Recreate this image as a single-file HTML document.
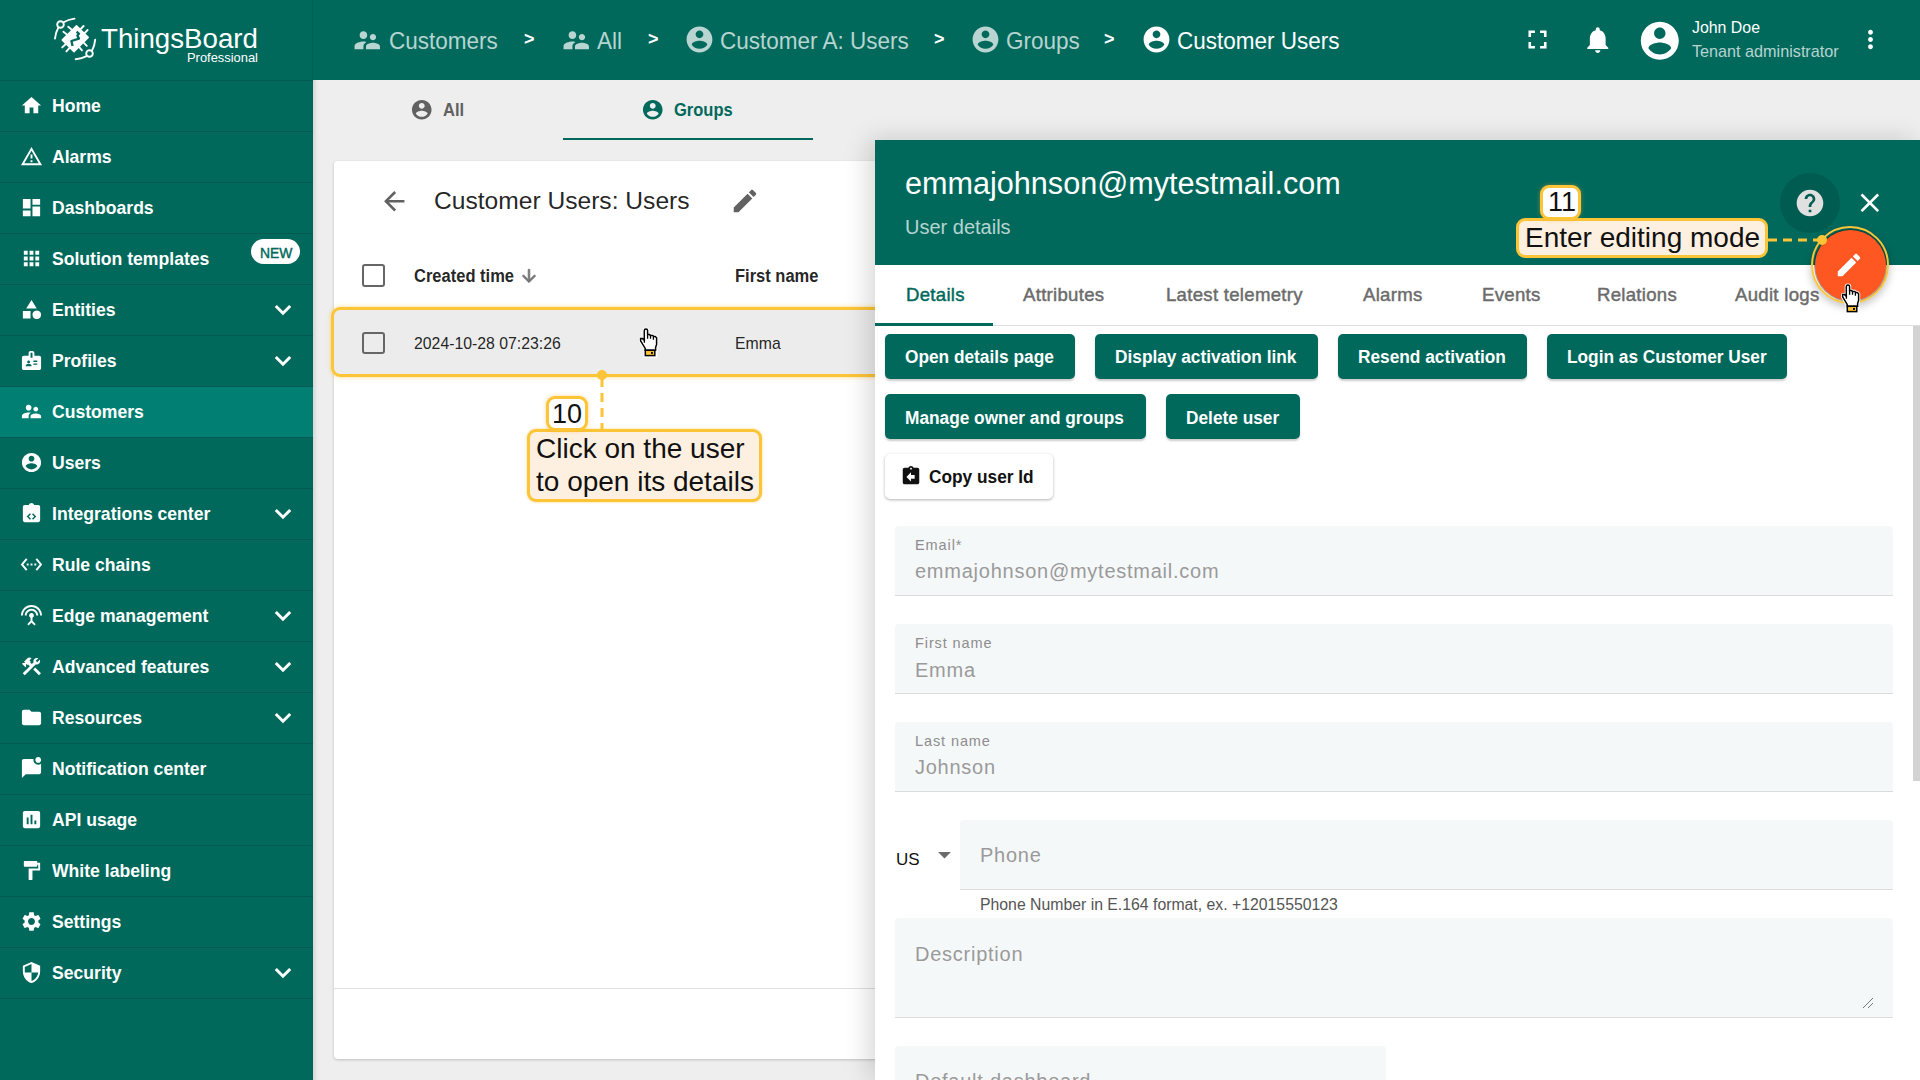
<!DOCTYPE html>
<html><head><meta charset="utf-8">
<style>
*{box-sizing:border-box;margin:0;padding:0}
html,body{width:1920px;height:1080px;overflow:hidden;font-family:"Liberation Sans",sans-serif;background:#eeeeee;position:relative}
.abs{position:absolute}
.t{position:absolute;white-space:nowrap;line-height:1}
svg{display:block}
</style></head><body>
<div class="abs" style="left:0px;top:0px;width:313px;height:1080px;background:#00695c"></div>
<div class="abs" style="left:313px;top:0px;width:1607px;height:80px;background:#00695c"></div>
<div class="abs" style="left:312px;top:0px;width:1px;height:80px;background:rgba(0,0,0,0.10)"></div>
<div class="abs" style="left:0px;top:80px;width:313px;height:1px;background:rgba(0,0,0,0.12)"></div>
<div class="abs" style="left:0px;top:131px;width:313px;height:1px;background:rgba(0,0,0,0.12)"></div>
<svg class="abs" style="left:20px;top:93.8px;" width="23" height="23" viewBox="0 0 24 24"><path fill="#fff" d="M10 20v-6h4v6h5v-8h3L12 3 2 12h3v8z"/></svg>
<div class="t " style="left:52px;top:96.76px;font-size:18.6px;color:#fff;font-weight:700;transform:scaleX(0.946);transform-origin:0 0;">Home</div>
<div class="abs" style="left:0px;top:182px;width:313px;height:1px;background:rgba(0,0,0,0.12)"></div>
<svg class="abs" style="left:20px;top:144.8px;" width="23" height="23" viewBox="0 0 24 24"><path fill="#fff" d="M12 5.99L19.53 19H4.47L12 5.99M12 2L1 21h22L12 2zm1 14h-2v2h2v-2zm0-6h-2v4h2v-4z"/></svg>
<div class="t " style="left:52px;top:147.76px;font-size:18.6px;color:#fff;font-weight:700;transform:scaleX(0.946);transform-origin:0 0;">Alarms</div>
<div class="abs" style="left:0px;top:233px;width:313px;height:1px;background:rgba(0,0,0,0.12)"></div>
<svg class="abs" style="left:20px;top:195.8px;" width="23" height="23" viewBox="0 0 24 24"><path fill="#fff" d="M3 13h8V3H3v10zm0 8h8v-6H3v6zm10 0h8V11h-8v10zm0-18v6h8V3h-8z"/></svg>
<div class="t " style="left:52px;top:198.76px;font-size:18.6px;color:#fff;font-weight:700;transform:scaleX(0.946);transform-origin:0 0;">Dashboards</div>
<div class="abs" style="left:0px;top:284px;width:313px;height:1px;background:rgba(0,0,0,0.12)"></div>
<svg class="abs" style="left:20px;top:246.8px;" width="23" height="23" viewBox="0 0 24 24"><path fill="#fff" d="M4 8h4V4H4v4zm6 12h4v-4h-4v4zm-6 0h4v-4H4v4zm0-6h4v-4H4v4zm6 0h4v-4h-4v4zm6-10v4h4V4h-4zm-6 4h4V4h-4v4zm6 6h4v-4h-4v4zm0 6h4v-4h-4v4z"/></svg>
<div class="t " style="left:52px;top:249.76px;font-size:18.6px;color:#fff;font-weight:700;transform:scaleX(0.946);transform-origin:0 0;">Solution templates</div>
<div class="abs" style="left:0px;top:335px;width:313px;height:1px;background:rgba(0,0,0,0.12)"></div>
<svg class="abs" style="left:20px;top:297.8px;" width="23" height="23" viewBox="0 0 24 24"><path fill="#fff" d="M12 2l-5.5 9h11z M17.5 13a4.5 4.5 0 1 0 0.001 0z M3 13.5h8v8H3z"/></svg>
<div class="t " style="left:52px;top:300.76px;font-size:18.6px;color:#fff;font-weight:700;transform:scaleX(0.946);transform-origin:0 0;">Entities</div>
<svg class="abs" style="left:272px;top:303px" width="22" height="14" viewBox="0 0 22 14"><path d="M3.8 3 L11 10.2 L18.2 3" fill="none" stroke="#fff" stroke-width="3"/></svg>
<div class="abs" style="left:0px;top:386px;width:313px;height:1px;background:rgba(0,0,0,0.12)"></div>
<svg class="abs" style="left:20px;top:348.8px;" width="23" height="23" viewBox="0 0 24 24"><path fill="#fff" d="M20 7h-5V4c0-1.1-.9-2-2-2h-2c-1.1 0-2 .9-2 2v3H4c-1.1 0-2 .9-2 2v11c0 1.1.9 2 2 2h16c1.1 0 2-.9 2-2V9c0-1.1-.9-2-2-2zM9 12c.83 0 1.5.67 1.5 1.5S9.83 15 9 15s-1.5-.67-1.5-1.5S8.17 12 9 12zm3 6H6v-.75c0-1 2-1.5 3-1.5s3 .5 3 1.5V18zm1-9h-2V4h2v5zm5 7.5h-4V15h4v1.5zm0-3h-4V12h4v1.5z"/></svg>
<div class="t " style="left:52px;top:351.76px;font-size:18.6px;color:#fff;font-weight:700;transform:scaleX(0.946);transform-origin:0 0;">Profiles</div>
<svg class="abs" style="left:272px;top:354px" width="22" height="14" viewBox="0 0 22 14"><path d="M3.8 3 L11 10.2 L18.2 3" fill="none" stroke="#fff" stroke-width="3"/></svg>
<div class="abs" style="left:0px;top:387px;width:313px;height:50px;background:#007f72"></div>
<div class="abs" style="left:0px;top:437px;width:313px;height:1px;background:rgba(0,0,0,0.12)"></div>
<svg class="abs" style="left:20px;top:399.8px;" width="23" height="23" viewBox="0 0 24 24"><path fill="#fff" d="M16.5 12c1.38 0 2.49-1.12 2.49-2.5S17.88 7 16.5 7C15.12 7 14 8.12 14 9.5s1.12 2.5 2.5 2.5zM9 11c1.66 0 2.99-1.34 2.99-3S10.66 5 9 5C7.34 5 6 6.34 6 8s1.34 3 3 3zm7.5 3c-1.83 0-5.5.92-5.5 2.75V19h11v-2.25c0-1.830-3.67-2.75-5.5-2.75zM9 13c-2.34 0-7 1.17-7 3.5V19h7v-2.25c0-.85.33-2.34 2.37-3.47C10.5 13.1 9.66 13 9 13z"/></svg>
<div class="t " style="left:52px;top:402.76px;font-size:18.6px;color:#fff;font-weight:700;transform:scaleX(0.946);transform-origin:0 0;">Customers</div>
<div class="abs" style="left:0px;top:488px;width:313px;height:1px;background:rgba(0,0,0,0.12)"></div>
<svg class="abs" style="left:20px;top:450.8px;" width="23" height="23" viewBox="0 0 24 24"><path fill="#fff" d="M12 2C6.48 2 2 6.48 2 12s4.48 10 10 10 10-4.48 10-10S17.52 2 12 2zm0 3c1.66 0 3 1.34 3 3s-1.34 3-3 3-3-1.34-3-3 1.34-3 3-3zm0 14.2c-2.5 0-4.71-1.28-6-3.22.03-1.99 4-3.08 6-3.08 1.99 0 5.97 1.09 6 3.08-1.29 1.940-3.5 3.22-6 3.22z"/></svg>
<div class="t " style="left:52px;top:453.76px;font-size:18.6px;color:#fff;font-weight:700;transform:scaleX(0.946);transform-origin:0 0;">Users</div>
<div class="abs" style="left:0px;top:539px;width:313px;height:1px;background:rgba(0,0,0,0.12)"></div>
<svg class="abs" style="left:20px;top:501.8px;" width="23" height="23" viewBox="0 0 24 24"><path fill="#fff" d="M19 3h-4.18C14.4 1.84 13.3 1 12 1s-2.4.84-2.82 2H5c-1.1 0-2 .9-2 2v14c0 1.1.9 2 2 2h14c1.1 0 2-.9 2-2V5c0-1.1-.9-2-2-2zm-8.6 15.6L7 15.2l3.4-3.4 1.06 1.06L9.12 15.2l2.34 2.34-1.06 1.06zm3.2 0l-1.06-1.06 2.34-2.34-2.34-2.34 1.06-1.06L17 15.2l-3.4 3.4z"/></svg>
<div class="t " style="left:52px;top:504.76px;font-size:18.6px;color:#fff;font-weight:700;transform:scaleX(0.946);transform-origin:0 0;">Integrations center</div>
<svg class="abs" style="left:272px;top:507px" width="22" height="14" viewBox="0 0 22 14"><path d="M3.8 3 L11 10.2 L18.2 3" fill="none" stroke="#fff" stroke-width="3"/></svg>
<div class="abs" style="left:0px;top:590px;width:313px;height:1px;background:rgba(0,0,0,0.12)"></div>
<svg class="abs" style="left:20px;top:552.8px;" width="23" height="23" viewBox="0 0 24 24"><path fill="#fff" d="M7.77 6.76L6.23 5.48.82 12l5.41 6.52 1.54-1.28L3.42 12l4.35-5.24zM7 13h2v-2H7v2zm10-2h-2v2h2v-2zm-6 2h2v-2h-2v2zm6.77-7.52l-1.54 1.28L20.58 12l-4.35 5.24 1.54 1.28L23.18 12l-5.41-6.52z"/></svg>
<div class="t " style="left:52px;top:555.76px;font-size:18.6px;color:#fff;font-weight:700;transform:scaleX(0.946);transform-origin:0 0;">Rule chains</div>
<div class="abs" style="left:0px;top:641px;width:313px;height:1px;background:rgba(0,0,0,0.12)"></div>
<svg class="abs" style="left:20px;top:603.8px;" width="23" height="23" viewBox="0 0 24 24"><path fill="#fff" d="M12 5c-3.87 0-7 3.13-7 7h2c0-2.76 2.24-5 5-5s5 2.24 5 5h2c0-3.87-3.13-7-7-7zm1 9.29c.88-.39 1.5-1.26 1.5-2.29 0-1.38-1.12-2.5-2.5-2.5S9.5 10.62 9.5 12c0 1.02.62 1.9 1.5 2.29v3.3L7.59 21 9 22.41l3-3 3 3L16.41 21 13 17.59v-3.3zM12 1C5.930 1 1 5.93 1 12h2c0-4.97 4.03-9 9-9s9 4.03 9 9h2c0-6.07-4.93-11-11-11z"/></svg>
<div class="t " style="left:52px;top:606.76px;font-size:18.6px;color:#fff;font-weight:700;transform:scaleX(0.946);transform-origin:0 0;">Edge management</div>
<svg class="abs" style="left:272px;top:609px" width="22" height="14" viewBox="0 0 22 14"><path d="M3.8 3 L11 10.2 L18.2 3" fill="none" stroke="#fff" stroke-width="3"/></svg>
<div class="abs" style="left:0px;top:692px;width:313px;height:1px;background:rgba(0,0,0,0.12)"></div>
<svg class="abs" style="left:20px;top:654.8px;" width="23" height="23" viewBox="0 0 24 24"><path fill="#fff" d="M13.783 15.172l2.121-2.121 5.996 5.996-2.121 2.121zM17.5 10c1.93 0 3.5-1.57 3.5-3.5 0-.58-.16-1.12-.41-1.6l-2.7 2.7-1.49-1.49 2.7-2.7c-.48-.25-1.02-.41-1.6-.41C15.57 3 14 4.57 14 6.5c0 .41.08.8.21 1.16l-1.850 1.85-1.78-1.78.71-.71-1.41-1.41L12 3.49c-1.17-1.17-3.07-1.17-4.24 0L4.22 7.03l1.41 1.41H2.81l-.71.71 3.54 3.54.71-.71V9.15l1.41 1.41.71-.71 1.78 1.78-7.41 7.41 2.12 2.12L16.34 9.790c.36.13.75.21 1.16.21z"/></svg>
<div class="t " style="left:52px;top:657.76px;font-size:18.6px;color:#fff;font-weight:700;transform:scaleX(0.946);transform-origin:0 0;">Advanced features</div>
<svg class="abs" style="left:272px;top:660px" width="22" height="14" viewBox="0 0 22 14"><path d="M3.8 3 L11 10.2 L18.2 3" fill="none" stroke="#fff" stroke-width="3"/></svg>
<div class="abs" style="left:0px;top:743px;width:313px;height:1px;background:rgba(0,0,0,0.12)"></div>
<svg class="abs" style="left:20px;top:705.8px;" width="23" height="23" viewBox="0 0 24 24"><path fill="#fff" d="M10 4H4c-1.1 0-1.99.9-1.99 2L2 18c0 1.1.9 2 2 2h16c1.1 0 2-.9 2-2V8c0-1.1-.9-2-2-2h-8l-2-2z"/></svg>
<div class="t " style="left:52px;top:708.76px;font-size:18.6px;color:#fff;font-weight:700;transform:scaleX(0.946);transform-origin:0 0;">Resources</div>
<svg class="abs" style="left:272px;top:711px" width="22" height="14" viewBox="0 0 22 14"><path d="M3.8 3 L11 10.2 L18.2 3" fill="none" stroke="#fff" stroke-width="3"/></svg>
<div class="abs" style="left:0px;top:794px;width:313px;height:1px;background:rgba(0,0,0,0.12)"></div>
<svg class="abs" style="left:20px;top:756.8px;" width="23" height="23" viewBox="0 0 24 24"><path fill="#fff" d="M22 6.98V16c0 1.1-.9 2-2 2H6l-4 4V4c0-1.1.9-2 2-2h10.1c-.06.32-.1.66-.1 1 0 2.76 2.24 5 5 5 1.13 0 2.16-.39 3-1.02zM16 3c0 1.66 1.34 3 3 3s3-1.34 3-3-1.34-3-3-3-3 1.34-3 3z"/></svg>
<div class="t " style="left:52px;top:759.76px;font-size:18.6px;color:#fff;font-weight:700;transform:scaleX(0.946);transform-origin:0 0;">Notification center</div>
<div class="abs" style="left:0px;top:845px;width:313px;height:1px;background:rgba(0,0,0,0.12)"></div>
<svg class="abs" style="left:20px;top:807.8px;" width="23" height="23" viewBox="0 0 24 24"><path fill="#fff" d="M19 3H5c-1.1 0-2 .9-2 2v14c0 1.1.9 2 2 2h14c1.1 0 2-.9 2-2V5c0-1.1-.9-2-2-2zM9 17H7v-7h2v7zm4 0h-2V7h2v10zm4 0h-2v-4h2v4z"/></svg>
<div class="t " style="left:52px;top:810.76px;font-size:18.6px;color:#fff;font-weight:700;transform:scaleX(0.946);transform-origin:0 0;">API usage</div>
<div class="abs" style="left:0px;top:896px;width:313px;height:1px;background:rgba(0,0,0,0.12)"></div>
<svg class="abs" style="left:20px;top:858.8px;" width="23" height="23" viewBox="0 0 24 24"><path fill="#fff" d="M18 4V3c0-.55-.45-1-1-1H5c-.55 0-1 .45-1 1v4c0 .55.45 1 1 1h12c.55 0 1-.45 1-1V6h1v4H9v11c0 .55.45 1 1 1h2c.55 0 1-.45 1-1v-9h8V4h-3z"/></svg>
<div class="t " style="left:52px;top:861.76px;font-size:18.6px;color:#fff;font-weight:700;transform:scaleX(0.946);transform-origin:0 0;">White labeling</div>
<div class="abs" style="left:0px;top:947px;width:313px;height:1px;background:rgba(0,0,0,0.12)"></div>
<svg class="abs" style="left:20px;top:909.8px;" width="23" height="23" viewBox="0 0 24 24"><path fill="#fff" d="M19.14 12.94c.04-.3.06-.61.06-.94 0-.32-.02-.64-.07-.94l2.03-1.58c.18-.14.23-.41.12-.61l-1.92-3.32c-.12-.22-.37-.29-.59-.22l-2.39.96c-.5-.38-1.03-.7-1.62-.94l-.36-2.54c-.04-.24-.24-.41-.48-.41h-3.84c-.24 0-.43.17-.47.41l-.36 2.54c-.59.24-1.13.57-1.62.94l-2.39-.96c-.22-.08-.47 0-.59.22L2.74 8.87c-.12.21-.08.47.12.61l2.03 1.58c-.05.3-.09.63-.09.94s.02.64.07.94l-2.03 1.58c-.18.14-.23.41-.12.61l1.92 3.32c.12.22.37.29.59.22l2.39-.96c.5.38 1.03.7 1.62.94l.36 2.54c.05.24.24.41.48.41h3.84c.24 0 .44-.17.47-.41l.36-2.54c.59-.24 1.13-.56 1.62-.94l2.39.96c.22.08.47 0 .59-.22l1.92-3.32c.12-.22.07-.47-.12-.61l-2.01-1.58zM12 15.6c-1.98 0-3.6-1.62-3.6-3.6s1.62-3.6 3.6-3.6 3.6 1.62 3.6 3.6-1.62 3.6-3.6 3.6z"/></svg>
<div class="t " style="left:52px;top:912.76px;font-size:18.6px;color:#fff;font-weight:700;transform:scaleX(0.946);transform-origin:0 0;">Settings</div>
<div class="abs" style="left:0px;top:998px;width:313px;height:1px;background:rgba(0,0,0,0.12)"></div>
<svg class="abs" style="left:20px;top:960.8px;" width="23" height="23" viewBox="0 0 24 24"><path fill="#fff" d="M12 1L3 5v6c0 5.55 3.84 10.74 9 12 5.16-1.26 9-6.45 9-12V5l-9-4zm0 10.99h7c-.53 4.12-3.28 7.79-7 8.94V12H5V6.3l7-3.11v8.8z"/></svg>
<div class="t " style="left:52px;top:963.76px;font-size:18.6px;color:#fff;font-weight:700;transform:scaleX(0.946);transform-origin:0 0;">Security</div>
<svg class="abs" style="left:272px;top:966px" width="22" height="14" viewBox="0 0 22 14"><path d="M3.8 3 L11 10.2 L18.2 3" fill="none" stroke="#fff" stroke-width="3"/></svg>
<div class="abs" style="left:251px;top:239.4px;width:49px;height:25px;background:#fff;border-radius:13px"></div>
<div class="t " style="left:259.8px;top:245.30px;font-size:15px;color:#00695c;font-weight:400;-webkit-text-stroke:0.45px #00695c;transform:scaleX(0.925);transform-origin:0 0;">NEW</div>
<svg class="abs" style="left:48px;top:12px" width="60" height="54" viewBox="0 0 60 54">
<g fill="none" stroke="#fff" stroke-width="1.9" stroke-linecap="round">
<circle cx="12.5" cy="12.5" r="3.3"/><circle cx="41.5" cy="41.5" r="3.3"/>
<path d="M15.6 10.2 Q 20 7.6 26.5 6.6"/><path d="M10.4 15.6 Q 7.8 20 7 26.5"/>
<path d="M44 38.6 Q 46.6 34 47.2 27.7"/><path d="M38.6 44.2 Q 34 46.6 27.7 47.2"/>
<path d="M15.4 19.8 L18.6 22.2 M20.2 14.8 L23.2 17.2 M32.6 17.2 L35.6 14.0 M36.6 21.2 L39.6 18.0 M35.2 30.2 L38.8 33.8 M31.2 35.2 L34 38.4 M14.2 35.4 L17.6 32.2 M18.4 39.4 L21.6 35.8"/>
</g>
<path d="M14.2 28 L28.5 13.8 L40.2 25.4 L26 39.6 Z" fill="#fff" stroke="#fff" stroke-width="1.5" stroke-linejoin="round"/>
<path d="M28.6 19.6 L31 21.8 L29.4 23.6 L31 26.6 L23.4 29 L24.6 34" fill="none" stroke="#00695c" stroke-width="2.3" stroke-linejoin="round"/>
</svg>
<div class="t " style="left:101px;top:25.05px;font-size:27.7px;color:#fff;font-weight:400;">ThingsBoard</div>
<div class="t " style="left:187px;top:52.08px;font-size:12.9px;color:#fff;font-weight:400;">Professional</div>
<svg class="abs" style="left:351.5px;top:25.1px;" width="30.5" height="30.5" viewBox="0 0 24 24"><path fill="rgba(255,255,255,0.72)" d="M16.5 12c1.38 0 2.49-1.12 2.49-2.5S17.88 7 16.5 7C15.12 7 14 8.12 14 9.5s1.12 2.5 2.5 2.5zM9 11c1.66 0 2.99-1.34 2.99-3S10.66 5 9 5C7.34 5 6 6.34 6 8s1.34 3 3 3zm7.5 3c-1.83 0-5.5.92-5.5 2.75V19h11v-2.25c0-1.830-3.67-2.75-5.5-2.75zM9 13c-2.34 0-7 1.17-7 3.5V19h7v-2.25c0-.85.33-2.34 2.37-3.47C10.5 13.1 9.66 13 9 13z"/></svg>
<div class="t " style="left:389px;top:29.26px;font-size:24.5px;color:rgba(255,255,255,0.72);font-weight:400;transform:scaleX(0.918);transform-origin:0 0;">Customers</div>
<svg class="abs" style="left:560.5px;top:25.1px;" width="30.5" height="30.5" viewBox="0 0 24 24"><path fill="rgba(255,255,255,0.72)" d="M16.5 12c1.38 0 2.49-1.12 2.49-2.5S17.88 7 16.5 7C15.12 7 14 8.12 14 9.5s1.12 2.5 2.5 2.5zM9 11c1.66 0 2.99-1.34 2.99-3S10.66 5 9 5C7.34 5 6 6.34 6 8s1.34 3 3 3zm7.5 3c-1.83 0-5.5.92-5.5 2.75V19h11v-2.25c0-1.830-3.67-2.75-5.5-2.75zM9 13c-2.34 0-7 1.17-7 3.5V19h7v-2.25c0-.85.33-2.34 2.37-3.47C10.5 13.1 9.66 13 9 13z"/></svg>
<div class="t " style="left:597px;top:29.26px;font-size:24.5px;color:rgba(255,255,255,0.72);font-weight:400;transform:scaleX(0.918);transform-origin:0 0;">All</div>
<svg class="abs" style="left:683.8px;top:24.1px;" width="31" height="31" viewBox="0 0 24 24"><path fill="rgba(255,255,255,0.72)" d="M12 2C6.48 2 2 6.48 2 12s4.48 10 10 10 10-4.48 10-10S17.52 2 12 2zm0 3c1.66 0 3 1.34 3 3s-1.34 3-3 3-3-1.34-3-3 1.34-3 3-3zm0 14.2c-2.5 0-4.71-1.28-6-3.22.03-1.99 4-3.08 6-3.08 1.99 0 5.97 1.09 6 3.08-1.29 1.940-3.5 3.22-6 3.22z"/></svg>
<div class="t " style="left:720px;top:29.26px;font-size:24.5px;color:rgba(255,255,255,0.72);font-weight:400;transform:scaleX(0.918);transform-origin:0 0;">Customer A: Users</div>
<svg class="abs" style="left:969.9px;top:24.1px;" width="31" height="31" viewBox="0 0 24 24"><path fill="rgba(255,255,255,0.72)" d="M12 2C6.48 2 2 6.48 2 12s4.48 10 10 10 10-4.48 10-10S17.52 2 12 2zm0 3c1.66 0 3 1.34 3 3s-1.34 3-3 3-3-1.34-3-3 1.34-3 3-3zm0 14.2c-2.5 0-4.71-1.28-6-3.22.03-1.99 4-3.08 6-3.08 1.99 0 5.97 1.09 6 3.08-1.29 1.940-3.5 3.22-6 3.22z"/></svg>
<div class="t " style="left:1006px;top:29.26px;font-size:24.5px;color:rgba(255,255,255,0.72);font-weight:400;transform:scaleX(0.918);transform-origin:0 0;">Groups</div>
<div class="t " style="left:524px;top:30.06px;font-size:18px;color:#fff;font-weight:700;">&gt;</div>
<div class="t " style="left:648px;top:30.06px;font-size:18px;color:#fff;font-weight:700;">&gt;</div>
<div class="t " style="left:934px;top:30.06px;font-size:18px;color:#fff;font-weight:700;">&gt;</div>
<div class="t " style="left:1104px;top:30.06px;font-size:18px;color:#fff;font-weight:700;">&gt;</div>
<svg class="abs" style="left:1140.6px;top:24.1px;" width="31" height="31" viewBox="0 0 24 24"><path fill="#fff" d="M12 2C6.48 2 2 6.48 2 12s4.48 10 10 10 10-4.48 10-10S17.52 2 12 2zm0 3c1.66 0 3 1.34 3 3s-1.34 3-3 3-3-1.34-3-3 1.34-3 3-3zm0 14.2c-2.5 0-4.71-1.28-6-3.22.03-1.99 4-3.08 6-3.08 1.99 0 5.97 1.09 6 3.08-1.29 1.940-3.5 3.22-6 3.22z"/></svg>
<div class="t " style="left:1177px;top:29.26px;font-size:24.5px;color:#fff;font-weight:400;transform:scaleX(0.918);transform-origin:0 0;">Customer Users</div>
<svg class="abs" style="left:1521.5px;top:24.1px;" width="31" height="31" viewBox="0 0 24 24"><path fill="#fff" d="M7 14H5v5h5v-2H7v-3zm-2-4h2V7h3V5H5v5zm12 7h-3v2h5v-5h-2v3zM14 5v2h3v3h2V5h-5z"/></svg>
<svg class="abs" style="left:1581.75px;top:23.7px;" width="31.5" height="31.5" viewBox="0 0 24 24"><path fill="#fff" d="M12 22c1.1 0 2-.9 2-2h-4c0 1.1.89 2 2 2zm6-6v-5c0-3.07-1.64-5.64-4.5-6.32V4c0-.83-.67-1.5-1.5-1.5s-1.5.67-1.5 1.5v.68C7.63 5.36 6 7.92 6 11v5l-2 2v1h16v-1l-2-2z"/></svg>
<svg class="abs" style="left:1637.2px;top:17.9px;" width="45.6" height="45.6" viewBox="0 0 24 24"><path fill="#fff" d="M12 2C6.48 2 2 6.48 2 12s4.48 10 10 10 10-4.48 10-10S17.52 2 12 2zm0 3c1.66 0 3 1.34 3 3s-1.34 3-3 3-3-1.34-3-3 1.34-3 3-3zm0 14.2c-2.5 0-4.71-1.28-6-3.22.03-1.99 4-3.08 6-3.08 1.99 0 5.97 1.09 6 3.08-1.29 1.940-3.5 3.22-6 3.22z"/></svg>
<div class="t " style="left:1692px;top:19.54px;font-size:15.9px;color:#fff;font-weight:400;">John Doe</div>
<div class="t " style="left:1692px;top:43.29px;font-size:16.2px;color:rgba(255,255,255,0.72);font-weight:400;">Tenant administrator</div>
<svg class="abs" style="left:1855.5px;top:25px;" width="29" height="29" viewBox="0 0 24 24"><path fill="#fff" d="M12 8c1.1 0 2-.9 2-2s-.9-2-2-2-2 .9-2 2 .9 2 2 2zm0 2c-1.1 0-2 .9-2 2s.9 2 2 2 2-.9 2-2-.9-2-2-2zm0 6c-1.1 0-2 .9-2 2s.9 2 2 2 2-.9 2-2-.9-2-2-2z"/></svg>
<div class="abs" style="left:313px;top:80px;width:1607px;height:60px;background:#eeeeee"></div>
<svg class="abs" style="left:410.3px;top:97.8px;" width="23.5" height="23.5" viewBox="0 0 24 24"><path fill="#616161" d="M12 2C6.48 2 2 6.48 2 12s4.48 10 10 10 10-4.48 10-10S17.52 2 12 2zm0 3c1.66 0 3 1.34 3 3s-1.34 3-3 3-3-1.34-3-3 1.34-3 3-3zm0 14.2c-2.5 0-4.71-1.28-6-3.22.03-1.99 4-3.08 6-3.08 1.99 0 5.97 1.09 6 3.08-1.29 1.940-3.5 3.22-6 3.22z"/></svg>
<div class="t " style="left:443px;top:101.06px;font-size:18px;color:#616161;font-weight:700;transform:scaleX(0.917);transform-origin:0 0;">All</div>
<svg class="abs" style="left:641.3px;top:97.8px;" width="23.5" height="23.5" viewBox="0 0 24 24"><path fill="#00695c" d="M12 2C6.48 2 2 6.48 2 12s4.48 10 10 10 10-4.48 10-10S17.52 2 12 2zm0 3c1.66 0 3 1.34 3 3s-1.34 3-3 3-3-1.34-3-3 1.34-3 3-3zm0 14.2c-2.5 0-4.71-1.28-6-3.22.03-1.99 4-3.08 6-3.08 1.99 0 5.97 1.09 6 3.08-1.29 1.940-3.5 3.22-6 3.22z"/></svg>
<div class="t " style="left:674px;top:101.06px;font-size:18px;color:#00695c;font-weight:700;transform:scaleX(0.917);transform-origin:0 0;">Groups</div>
<div class="abs" style="left:563px;top:138px;width:250px;height:2px;background:#00695c"></div>
<div class="abs" style="left:313px;top:80px;width:5px;height:1000px;background:linear-gradient(to right,rgba(0,0,0,0.10),rgba(0,0,0,0))"></div>
<div class="abs" style="left:334px;top:161px;width:600px;height:898px;background:#fff;border-radius:4px;box-shadow:0 1px 3px rgba(0,0,0,0.2)"></div>
<svg class="abs" style="left:378.8px;top:186.3px;" width="30.5" height="30.5" viewBox="0 0 24 24"><path fill="#616161" d="M20 11H7.83l5.59-5.59L12 4l-8 8 8 8 1.41-1.41L7.83 13H20v-2z"/></svg>
<div class="t " style="left:434px;top:189.18px;font-size:24.6px;color:rgba(0,0,0,0.87);font-weight:400;">Customer Users: Users</div>
<svg class="abs" style="left:730px;top:186px;" width="30" height="30" viewBox="0 0 24 24"><path fill="#616161" d="M3 17.25V21h3.75L17.81 9.94l-3.75-3.75L3 17.25zM20.71 7.04c.39-.39.39-1.02 0-1.41l-2.34-2.34c-.39-.39-1.02-.39-1.41 0l-1.83 1.83 3.75 3.75 1.83-1.83z"/></svg>
<div class="abs" style="left:362px;top:264px;width:23px;height:23px;border:2.3px solid #666;border-radius:3px"></div>
<div class="t " style="left:414px;top:266.76px;font-size:18px;color:rgba(0,0,0,0.87);font-weight:700;transform:scaleX(0.917);transform-origin:0 0;">Created time</div>
<svg class="abs" style="left:519px;top:266px;overflow:visible" width="20" height="20" viewBox="0 0 24 24"><path stroke="#757575" stroke-width="0.9" fill="#757575" d="M20 12l-1.41-1.41L13 16.17V4h-2v12.17l-5.58-5.59L4 12l8 8 8-8z"/></svg>
<div class="t " style="left:735px;top:266.76px;font-size:18px;color:rgba(0,0,0,0.87);font-weight:700;transform:scaleX(0.917);transform-origin:0 0;">First name</div>
<div class="abs" style="left:334px;top:309px;width:560px;height:66px;background:#ececec"></div>
<div class="abs" style="left:362px;top:332px;width:23px;height:22px;border:2.3px solid #666;border-radius:3px"></div>
<div class="t " style="left:414px;top:335.11px;font-size:17px;color:rgba(0,0,0,0.87);font-weight:400;transform:scaleX(0.93);transform-origin:0 0;">2024-10-28 07:23:26</div>
<div class="t " style="left:735px;top:335.11px;font-size:17px;color:rgba(0,0,0,0.87);font-weight:400;transform:scaleX(0.93);transform-origin:0 0;">Emma</div>
<div class="abs" style="left:334px;top:988px;width:560px;height:1px;background:#e0e0e0"></div>
<div class="abs" style="left:331px;top:307px;width:560px;height:70px;border:3px solid #fcc437;border-radius:9px;box-shadow:0 0 4px rgba(251,192,45,0.6)"></div>
<svg class="abs" style="left:595px;top:368px" width="14" height="64" viewBox="0 0 14 64"><circle cx="7" cy="7" r="5" fill="#fcc437"/><path d="M7 10 V62" stroke="#fcc437" stroke-width="3" stroke-dasharray="9 6"/></svg>
<div class="abs" style="left:527px;top:429px;width:235px;height:73px;background:#fdf0e0;border:3px solid #fcc437;border-radius:9px;box-shadow:0 0 3px rgba(251,192,45,.6)"></div>
<div class="t " style="left:536px;top:434.90px;font-size:28px;color:#111;font-weight:400;">Click on the user</div>
<div class="t " style="left:536px;top:467.60px;font-size:28px;color:#111;font-weight:400;">to open its details</div>
<div class="abs" style="left:546px;top:396px;width:42px;height:35px;background:#fff;border:3px solid #fcc437;border-radius:9px;box-shadow:0 0 4px rgba(245,166,35,.45)"></div>
<div class="t " style="left:552px;top:400.64px;font-size:27px;color:#111;font-weight:400;">10</div>
<div class="abs" style="left:875px;top:140px;width:1045px;height:940px;background:#fff;box-shadow:-6px 0 24px rgba(0,0,0,0.16)"></div>
<div class="abs" style="left:875px;top:140px;width:1045px;height:125px;background:#00695c"></div>
<div class="t " style="left:905px;top:167.60px;font-size:30.6px;color:#fff;font-weight:400;">emmajohnson@mytestmail.com</div>
<div class="t " style="left:905px;top:217.37px;font-size:20px;color:rgba(255,255,255,0.72);font-weight:400;">User details</div>
<div class="abs" style="left:1780px;top:173px;width:60px;height:60px;background:rgba(0,0,0,0.12);border-radius:50%"></div>
<svg class="abs" style="left:1794px;top:187px;" width="32" height="32" viewBox="0 0 24 24"><path fill="#e0e0e0" d="M12 2C6.48 2 2 6.48 2 12s4.48 10 10 10 10-4.48 10-10S17.52 2 12 2zm1 17h-2v-2h2v2zm2.07-7.75l-.9.92C13.45 12.9 13 13.5 13 15h-2v-.5c0-1.1.45-2.1 1.17-2.83l1.24-1.26c.37-.36.59-.86.59-1.41 0-1.1-.9-2-2-2s-2 .9-2 2H8c0-2.21 1.79-4 4-4s4 1.79 4 4c0 .88-.36 1.68-.93 2.25z"/></svg>
<svg class="abs" style="left:1854px;top:187.4px;" width="31.7" height="31.7" viewBox="0 0 24 24"><path fill="#fff" d="M19 6.41L17.59 5 12 10.59 6.41 5 5 6.41 10.59 12 5 17.59 6.41 19 12 13.41 17.59 19 19 17.590 13.41 12z"/></svg>
<div class="t " style="left:906px;top:286.26px;font-size:18.6px;color:#00695c;font-weight:400;-webkit-text-stroke:0.45px #00695c;letter-spacing:0.28px;">Details</div>
<div class="t " style="left:1023px;top:286.26px;font-size:18.6px;color:#6b6b6b;font-weight:400;-webkit-text-stroke:0.45px #6b6b6b;letter-spacing:0.28px;">Attributes</div>
<div class="t " style="left:1166px;top:286.26px;font-size:18.6px;color:#6b6b6b;font-weight:400;-webkit-text-stroke:0.45px #6b6b6b;letter-spacing:0.28px;">Latest telemetry</div>
<div class="t " style="left:1363px;top:286.26px;font-size:18.6px;color:#6b6b6b;font-weight:400;-webkit-text-stroke:0.45px #6b6b6b;letter-spacing:0.28px;">Alarms</div>
<div class="t " style="left:1482px;top:286.26px;font-size:18.6px;color:#6b6b6b;font-weight:400;-webkit-text-stroke:0.45px #6b6b6b;letter-spacing:0.28px;">Events</div>
<div class="t " style="left:1597px;top:286.26px;font-size:18.6px;color:#6b6b6b;font-weight:400;-webkit-text-stroke:0.45px #6b6b6b;letter-spacing:0.28px;">Relations</div>
<div class="t " style="left:1735px;top:286.26px;font-size:18.6px;color:#6b6b6b;font-weight:400;-webkit-text-stroke:0.45px #6b6b6b;letter-spacing:0.28px;">Audit logs</div>
<div class="abs" style="left:875px;top:325px;width:1045px;height:1px;background:#e0e0e0"></div>
<div class="abs" style="left:875px;top:323px;width:118px;height:3px;background:#00695c"></div>
<div class="abs" style="left:885px;top:334px;width:190px;height:45px;background:#00695c;border-radius:5px;box-shadow:0 2px 2px rgba(0,0,0,0.2)"></div>
<div class="t " style="left:905px;top:348.01px;font-size:18.3px;color:#fff;font-weight:700;transform:scaleX(0.945);transform-origin:0 0;">Open details page</div>
<div class="abs" style="left:1095px;top:334px;width:223px;height:45px;background:#00695c;border-radius:5px;box-shadow:0 2px 2px rgba(0,0,0,0.2)"></div>
<div class="t " style="left:1115px;top:348.01px;font-size:18.3px;color:#fff;font-weight:700;transform:scaleX(0.945);transform-origin:0 0;">Display activation link</div>
<div class="abs" style="left:1338px;top:334px;width:189px;height:45px;background:#00695c;border-radius:5px;box-shadow:0 2px 2px rgba(0,0,0,0.2)"></div>
<div class="t " style="left:1358px;top:348.01px;font-size:18.3px;color:#fff;font-weight:700;transform:scaleX(0.945);transform-origin:0 0;">Resend activation</div>
<div class="abs" style="left:1547px;top:334px;width:240px;height:45px;background:#00695c;border-radius:5px;box-shadow:0 2px 2px rgba(0,0,0,0.2)"></div>
<div class="t " style="left:1567px;top:348.01px;font-size:18.3px;color:#fff;font-weight:700;transform:scaleX(0.945);transform-origin:0 0;">Login as Customer User</div>
<div class="abs" style="left:885px;top:394px;width:261px;height:45px;background:#00695c;border-radius:5px;box-shadow:0 2px 2px rgba(0,0,0,0.2)"></div>
<div class="t " style="left:905px;top:408.51px;font-size:18.3px;color:#fff;font-weight:700;transform:scaleX(0.945);transform-origin:0 0;">Manage owner and groups</div>
<div class="abs" style="left:1166px;top:394px;width:134px;height:45px;background:#00695c;border-radius:5px;box-shadow:0 2px 2px rgba(0,0,0,0.2)"></div>
<div class="t " style="left:1186px;top:408.51px;font-size:18.3px;color:#fff;font-weight:700;transform:scaleX(0.945);transform-origin:0 0;">Delete user</div>
<div class="abs" style="left:885px;top:454px;width:168px;height:45px;background:#fff;border-radius:5px;box-shadow:0 1px 3px rgba(0,0,0,0.3)"></div>
<svg class="abs" style="left:900px;top:465px;" width="22" height="22" viewBox="0 0 24 24"><path fill="#111" d="M19 3h-4.18C14.4 1.84 13.3 1 12 1c-1.3 0-2.4.84-2.82 2H5c-1.1 0-2 .9-2 2v14c0 1.1.9 2 2 2h14c1.1 0 2-.9 2-2V5c0-1.1-.9-2-2-2zm-7 0c.55 0 1 .45 1 1s-.45 1-1 1-1-.45-1-1 .45-1 1-1zm4 12h-4v3l-5-5 5-5v3h4v4z"/></svg>
<div class="t " style="left:929px;top:468.01px;font-size:18.3px;color:#111;font-weight:700;transform:scaleX(0.945);transform-origin:0 0;">Copy user Id</div>
<div class="abs" style="left:895px;top:526px;width:998px;height:70px;background:#f5f8f9;border-radius:4px 4px 0 0;border-bottom:1px solid #dcdcdc"></div>
<div class="t " style="left:915px;top:538.03px;font-size:14.5px;color:#8d8d8d;font-weight:400;letter-spacing:0.9px;">Email*</div>
<div class="t " style="left:915px;top:561.07px;font-size:20px;color:#9a9a9a;font-weight:400;letter-spacing:0.75px;">emmajohnson@mytestmail.com</div>
<div class="abs" style="left:895px;top:624px;width:998px;height:70px;background:#f5f8f9;border-radius:4px 4px 0 0;border-bottom:1px solid #dcdcdc"></div>
<div class="t " style="left:915px;top:635.73px;font-size:14.5px;color:#8d8d8d;font-weight:400;letter-spacing:0.9px;">First name</div>
<div class="t " style="left:915px;top:659.77px;font-size:20px;color:#9a9a9a;font-weight:400;letter-spacing:0.75px;">Emma</div>
<div class="abs" style="left:895px;top:722px;width:998px;height:70px;background:#f5f8f9;border-radius:4px 4px 0 0;border-bottom:1px solid #dcdcdc"></div>
<div class="t " style="left:915px;top:733.73px;font-size:14.5px;color:#8d8d8d;font-weight:400;letter-spacing:0.9px;">Last name</div>
<div class="t " style="left:915px;top:757.07px;font-size:20px;color:#9a9a9a;font-weight:400;letter-spacing:0.75px;">Johnson</div>
<div class="t " style="left:896px;top:851.21px;font-size:17px;color:#111;font-weight:400;">US</div>
<svg class="abs" style="left:929.3px;top:839px;" width="31" height="31" viewBox="0 0 24 24"><path fill="#6b6b6b" d="M7 10l5 5 5-5z"/></svg>
<div class="abs" style="left:960px;top:820px;width:933px;height:70px;background:#f5f8f9;border-radius:4px 4px 0 0;border-bottom:1px solid #dcdcdc"></div>
<div class="t " style="left:980px;top:845.07px;font-size:20px;color:#9a9a9a;font-weight:400;letter-spacing:0.75px;">Phone</div>
<div class="t " style="left:980px;top:896.63px;font-size:15.8px;color:#555;font-weight:400;">Phone Number in E.164 format, ex. +12015550123</div>
<div class="abs" style="left:895px;top:918px;width:998px;height:100px;background:#f5f8f9;border-radius:4px 4px 0 0;border-bottom:1px solid #dcdcdc"></div>
<div class="t " style="left:915px;top:943.57px;font-size:20px;color:#9a9a9a;font-weight:400;letter-spacing:0.75px;">Description</div>
<svg class="abs" style="left:1862px;top:997px" width="12" height="12" viewBox="0 0 12 12"><path d="M1 11 L11 1 M6 11 L11 6" stroke="#777" stroke-width="1"/></svg>
<div class="abs" style="left:895px;top:1046px;width:491px;height:60px;background:#f5f8f9;border-radius:4px 4px 0 0"></div>
<div class="t " style="left:915px;top:1071.07px;font-size:20px;color:#9a9a9a;font-weight:400;letter-spacing:0.75px;">Default dashboard</div>
<div class="abs" style="left:1913px;top:326px;width:7px;height:455px;background:#d3d3d3"></div>
<div class="abs" style="left:1811px;top:226px;width:78px;height:78px;border:2.5px solid #fcc437;border-radius:50%;box-shadow:0 3px 8px rgba(0,0,0,0.25)"></div>
<div class="abs" style="left:1814.5px;top:229.5px;width:71px;height:71px;background:#ff5722;border-radius:50%;box-shadow:0 0 0 1px rgba(0,0,0,0.35)"></div>
<svg class="abs" style="left:1834px;top:250px;" width="30" height="30" viewBox="0 0 24 24"><path fill="#fff" d="M3 17.25V21h3.75L17.81 9.94l-3.75-3.75L3 17.25zM20.71 7.04c.39-.39.39-1.02 0-1.41l-2.34-2.34c-.39-.39-1.02-.39-1.41 0l-1.83 1.83 3.75 3.75 1.83-1.83z"/></svg>
<svg class="abs" style="left:1766px;top:232px" width="64" height="16" viewBox="0 0 64 16"><path d="M2 8 H56" stroke="#fcc437" stroke-width="3" stroke-dasharray="9 6"/><circle cx="56" cy="8" r="5" fill="#fcc437"/></svg>
<div class="abs" style="left:1516px;top:218px;width:252px;height:40px;background:#fdf0e0;border:3px solid #fcc437;border-radius:9px"></div>
<div class="t " style="left:1525px;top:224.30px;font-size:28px;color:#111;font-weight:400;">Enter editing mode</div>
<div class="abs" style="left:1540px;top:185px;width:41px;height:35px;background:#fff;border:3px solid #fcc437;border-radius:9px;box-shadow:0 0 4px rgba(245,166,35,.45)"></div>
<div class="t " style="left:1548px;top:189.14px;font-size:27px;color:#111;font-weight:400;">11</div>
<svg class="abs" style="left:630px;top:322px" width="36" height="40" viewBox="0 0 36 40">
<path d="M14.3 8.6 Q14.3 7.1 15.95 7.1 Q17.6 7.1 17.6 8.6 L17.6 12.6 L19.6 12.6 L20.4 13.4 L22.8 13.4 L23.6 14.4 L25.2 14.4 L26.6 15.8 L26.6 22.4 L25.6 25.6 L25.6 28.2 L15.2 28.2 L15.2 26.4 L10.6 18.8 L10.6 16.6 L12.6 16.6 L14.3 18.3 Z M15 28 H25.8 V34.2 H15 Z" fill="#fff" stroke="#fff" stroke-width="3.2" stroke-linejoin="round"/>
<path d="M14.3 8.6 Q14.3 7.1 15.95 7.1 Q17.6 7.1 17.6 8.6 L17.6 12.6 L19.6 12.6 L20.4 13.4 L22.8 13.4 L23.6 14.4 L25.2 14.4 L26.6 15.8 L26.6 22.4 L25.6 25.6 L25.6 28.2 L15.2 28.2 L15.2 26.4 L10.6 18.8 L10.6 16.6 L12.6 16.6 L14.3 18.3 Z" fill="#fff" stroke="#000" stroke-width="1.5" stroke-linejoin="miter"/>
<path d="M17.6 12.8 V16.8 M20.5 13.4 V16.8 M23.4 14.5 V17.8 M14.4 17.5 V20.8" stroke="#000" stroke-width="1.3" fill="none"/>
<rect x="15.3" y="28.3" width="9.5" height="5.3" fill="#fcc437" stroke="#000" stroke-width="1.5"/>
<rect x="21" y="30" width="1.9" height="1.9" fill="#000"/></svg>
<svg class="abs" style="left:1831.9px;top:278.1px" width="36" height="40" viewBox="0 0 36 40">
<path d="M14.3 8.6 Q14.3 7.1 15.95 7.1 Q17.6 7.1 17.6 8.6 L17.6 12.6 L19.6 12.6 L20.4 13.4 L22.8 13.4 L23.6 14.4 L25.2 14.4 L26.6 15.8 L26.6 22.4 L25.6 25.6 L25.6 28.2 L15.2 28.2 L15.2 26.4 L10.6 18.8 L10.6 16.6 L12.6 16.6 L14.3 18.3 Z M15 28 H25.8 V34.2 H15 Z" fill="#fff" stroke="#fff" stroke-width="3.2" stroke-linejoin="round"/>
<path d="M14.3 8.6 Q14.3 7.1 15.95 7.1 Q17.6 7.1 17.6 8.6 L17.6 12.6 L19.6 12.6 L20.4 13.4 L22.8 13.4 L23.6 14.4 L25.2 14.4 L26.6 15.8 L26.6 22.4 L25.6 25.6 L25.6 28.2 L15.2 28.2 L15.2 26.4 L10.6 18.8 L10.6 16.6 L12.6 16.6 L14.3 18.3 Z" fill="#fff" stroke="#000" stroke-width="1.5" stroke-linejoin="miter"/>
<path d="M17.6 12.8 V16.8 M20.5 13.4 V16.8 M23.4 14.5 V17.8 M14.4 17.5 V20.8" stroke="#000" stroke-width="1.3" fill="none"/>
<rect x="15.3" y="28.3" width="9.5" height="5.3" fill="#fcc437" stroke="#000" stroke-width="1.5"/>
<rect x="21" y="30" width="1.9" height="1.9" fill="#000"/></svg>
</body></html>
